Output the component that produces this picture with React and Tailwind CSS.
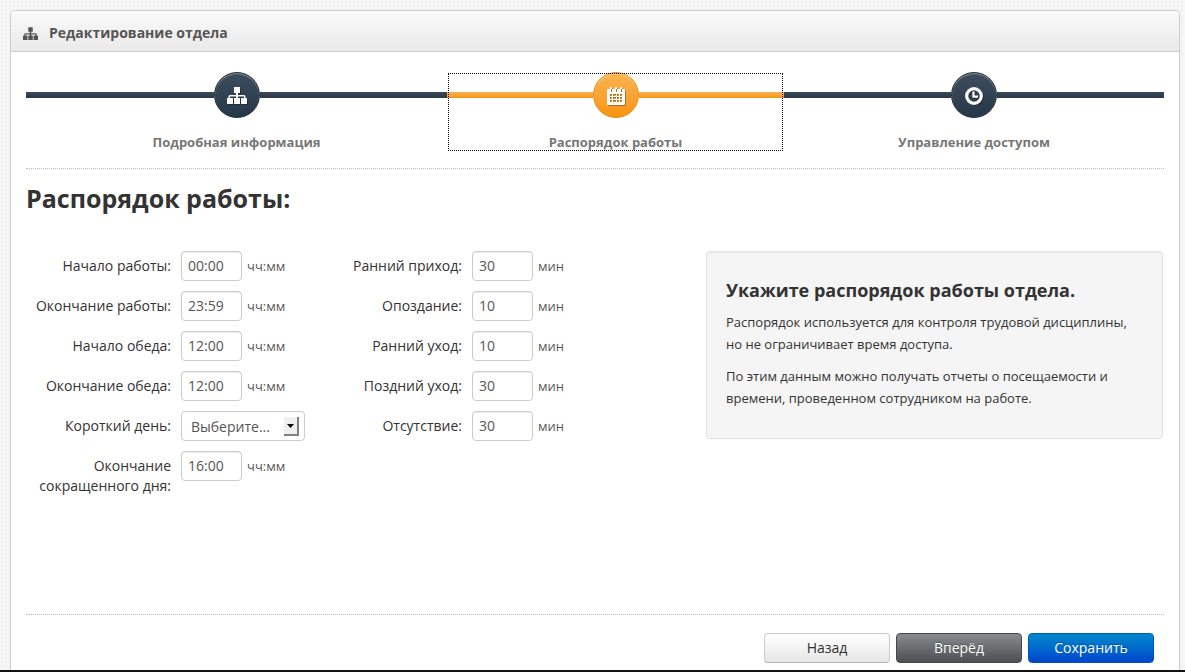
import React from "react";

const steps = [
  { id: "info", title: "Подробная информация", icon: SitemapIcon },
  { id: "schedule", title: "Распорядок работы", icon: CalendarIcon, active: true },
  { id: "access", title: "Управление доступом", icon: ClockIcon },
];

const timeFields = [
  { id: "work-start", label: "Начало работы:", value: "00:00" },
  { id: "work-end", label: "Окончание работы:", value: "23:59" },
  { id: "lunch-start", label: "Начало обеда:", value: "12:00" },
  { id: "lunch-end", label: "Окончание обеда:", value: "12:00" },
];

const minuteFields = [
  { id: "early-arrival", label: "Ранний приход:", value: "30" },
  { id: "late-arrival", label: "Опоздание:", value: "10" },
  { id: "early-leave", label: "Ранний уход:", value: "10" },
  { id: "late-leave", label: "Поздний уход:", value: "30" },
  { id: "absence", label: "Отсутствие:", value: "30" },
];

function SitemapIcon({ className }) {
  return (
    <svg viewBox="0 0 20 18" fill="currentColor" className={className} aria-hidden="true">
      <path d="M7.500 0h5q.5 0 .5.500v5q0 .5-.5.500H11v2h6q1.500 0 1.500 1.500V11h1q.5 0 .5.500v5q0 .5-.5.500h-5q-.5 0-.5-.500v-5q0-.5.500-.500H17V9.500h-6V11h1.500q.5 0 .5.500v5q0 .5-.5.500h-5q-.5 0-.5-.500v-5q0-.5.500-.500H9V9.500H3V11h2.500q.5 0 .5.500v5q0 .5-.5.500h-5q-.5 0-.5-.500v-5q0-.5.500-.500h1V9.500Q1.500 8 3 8h6V6H7.500q-.5 0-.5-.500v-5q0-.5.500-.500z" />
    </svg>
  );
}

function CalendarIcon({ className }) {
  return (
    <svg viewBox="0 0 18 18" fill="currentColor" className={className} aria-hidden="true">
      <path
        fillRule="evenodd"
        d="M0 3a1 1 0 0 1 1-1h2V1a1 1 0 0 1 2 0v1h3V1a1 1 0 0 1 2 0v1h3V1a1 1 0 0 1 2 0v1h2a1 1 0 0 1 1 1v14a1 1 0 0 1-1 1H1a1 1 0 0 1-1-1zM4 2v3h1V2zM9 2v3h1V2zM14 2v3h1V2zM3 7v2h2V7zM6 7v2h3V7zM10 7v2h2V7zM13 7v2h2V7zM3 10v2h2v-2zM6 10v2h3v-2zM10 10v2h2v-2zM13 10v2h2v-2zM3 13v2h2v-2zM6 13v2h3v-2zM10 13v2h2v-2zM13 13v2h2v-2z"
      />
    </svg>
  );
}

function ClockIcon({ className }) {
  return (
    <svg viewBox="0 0 18 18" fill="none" stroke="currentColor" className={className} aria-hidden="true">
      <circle cx="9" cy="9" r="7.300" strokeWidth="3.200" />
      <path d="M8.500 4.500v5.200h4.500" strokeWidth="2.200" />
    </svg>
  );
}

function Step({ title, icon: Icon, active }) {
  return (
    <li>
      <a
        href="#"
        className={
          active
            ? "flex flex-col items-center outline-1 -outline-offset-2 outline-dotted outline-black"
            : "flex flex-col items-center"
        }
      >
        <span className="grid w-full grid-cols-[1fr_46px_1fr] items-center">
          <span
            className={
              active
                ? "h-1.5 bg-linear-to-b from-[#fbb450] to-[#f89406]"
                : "h-1.5 bg-linear-to-b from-[#3a4a5a] to-[#2a3848]"
            }
          />
          <span
            className={
              active
                ? "flex size-[46px] items-center justify-center rounded-full border border-[#e08e14] bg-linear-to-b from-[#fbb450] to-[#f89406] text-white shadow-[inset_0_1px_1px_rgba(255,255,255,0.4)]"
                : "flex size-[46px] items-center justify-center rounded-full border border-[#232c36] bg-linear-to-b from-[#3e4d5c] to-[#26374a] text-white shadow-[inset_0_1px_1px_rgba(255,255,255,0.4)]"
            }
          >
            <Icon className="mt-0.5 h-[18px] w-5 drop-shadow-[1px_1px_0_rgba(0,0,0,0.3)]" />
          </span>
          <span
            className={
              active
                ? "h-1.5 bg-linear-to-b from-[#fbb450] to-[#f89406]"
                : "h-1.5 bg-linear-to-b from-[#3a4a5a] to-[#2a3848]"
            }
          />
        </span>
        <span className="mt-3.5 text-[13px] leading-5 font-bold text-[#777777]">{title}</span>
      </a>
    </li>
  );
}

function Field({ id, label, value, unit }) {
  return (
    <>
      <label htmlFor={id} className="py-[5px] text-right">{label}</label>
      <div className="flex items-center gap-[5px] self-start">
        <input
          id={id}
          type="text"
          defaultValue={value}
          className="h-[30px] w-[61px] rounded border border-[#cccccc] px-1.5 pb-0.5 text-[#555555] shadow-[inset_0_1px_1px_rgba(0,0,0,0.075)]"
        />
        <span className="text-[13px] text-[#595959]">{unit}</span>
      </div>
    </>
  );
}

export default function App() {
  return (
    <div className="flex min-h-screen flex-col border-b-2 border-[#14120f] bg-[#f6f6f6] bg-[radial-gradient(#f0f0f0_1px,transparent_1px)] bg-size-[4px_4px] px-[10px] pt-[10px] pr-[5px] font-['Open_Sans',sans-serif] text-sm leading-5 text-[#333333]">
      <main className="flex grow flex-col rounded-t-[5px] border border-b-0 border-[#cdcdcd] bg-white">
        {/* Panel title */}
        <header className="flex items-center gap-[11px] rounded-t border-b border-[#cdcdcd] bg-linear-to-b from-[#fafafa] to-[#e9e9e9] px-3 pt-3 pb-2 text-[#555555]">
          <SitemapIcon className="mt-0.5 h-[14px] w-[15px]" />
          <h1 className="font-bold">Редактирование отдела</h1>
        </header>

        <form className="flex grow flex-col px-[15px] pt-5">
          {/* Wizard steps */}
          <ol className="grid grid-cols-[421fr_337fr_380fr] border-b border-dotted border-[#bbbbbb] pb-4">
            {steps.map((step) => (
              <Step key={step.id} {...step} />
            ))}
          </ol>

          <h2 className="mt-[10px] text-[25px] leading-[38px] font-bold">Распорядок работы:</h2>

          <div className="mt-[34px] flex items-start">
            <div className="grid w-[291px] shrink-0 grid-cols-[145px_1fr] gap-x-[10px] gap-y-[10px]">
              {timeFields.map((field) => (
                <Field key={field.id} unit="чч:мм" {...field} />
              ))}
              <label htmlFor="short-day" className="py-[5px] text-right">Короткий день:</label>
              <div className="relative w-[124px]">
                <select
                  id="short-day"
                  className="h-[30px] w-full appearance-none rounded border border-[#cccccc] bg-white pt-0.5 pr-7 pl-[9px] text-[#555555]"
                >
                  <option>Выберите...</option>
                </select>
                <span className="pointer-events-none absolute top-1.5 right-1.5 flex h-[19px] w-[15px] items-center justify-center border-r-2 border-b-2 border-[#808080] bg-[#efefef]">
                  <svg viewBox="0 0 7 4" className="h-1 w-[7px]" aria-hidden="true">
                    <path d="M0 0h7L3.500 4z" />
                  </svg>
                </span>
              </div>
              <Field id="short-end" label="Окончание сокращенного дня:" value="16:00" unit="чч:мм" />
            </div>

            <div className="grid w-[291px] shrink-0 grid-cols-[145px_1fr] gap-x-[10px] gap-y-[10px]">
              {minuteFields.map((field) => (
                <Field key={field.id} unit="мин" {...field} />
              ))}
            </div>

            {/* Hint */}
            <aside className="mr-px ml-auto w-[457px] rounded border border-[#e3e3e3] bg-[#f5f5f5] px-[19px] pt-[18px] pb-[29px] text-[13px] leading-[22px] shadow-[inset_0_1px_1px_rgba(0,0,0,0.05)]">
              <h3 className="mb-px text-lg leading-10 font-bold">Укажите распорядок работы отдела.</h3>
              <p>Распорядок используется для контроля трудовой дисциплины, но не ограничивает время доступа.</p>
              <p className="mt-[10px]">
                По этим данным можно получать отчеты о посещаемости и времени, проведенном сотрудником на работе.
              </p>
            </aside>
          </div>

          {/* Actions */}
          <div className="mt-auto flex justify-end gap-1.5 border-t border-dotted border-[#bbbbbb] pt-[18px] pr-[10px] pb-[7px]">
            <button
              type="button"
              className="h-[30px] w-[126px] rounded border border-[#cccccc] border-b-[#b3b3b3] bg-linear-to-b from-white to-[#e6e6e6]"
            >
              Назад
            </button>
            <button
              type="button"
              className="h-[30px] w-[126px] rounded border border-[#45484a] bg-linear-to-b from-[#888c8e] to-[#4d5052] text-white text-shadow-[0_-1px_0_rgba(0,0,0,0.25)]"
            >
              Вперёд
            </button>
            <button
              type="submit"
              className="h-[30px] w-[126px] rounded border border-[#0055b8] bg-linear-to-b from-[#0088cc] to-[#0044cc] text-white text-shadow-[0_-1px_0_rgba(0,0,0,0.25)]"
            >
              Сохранить
            </button>
          </div>
        </form>
      </main>
    </div>
  );
}
